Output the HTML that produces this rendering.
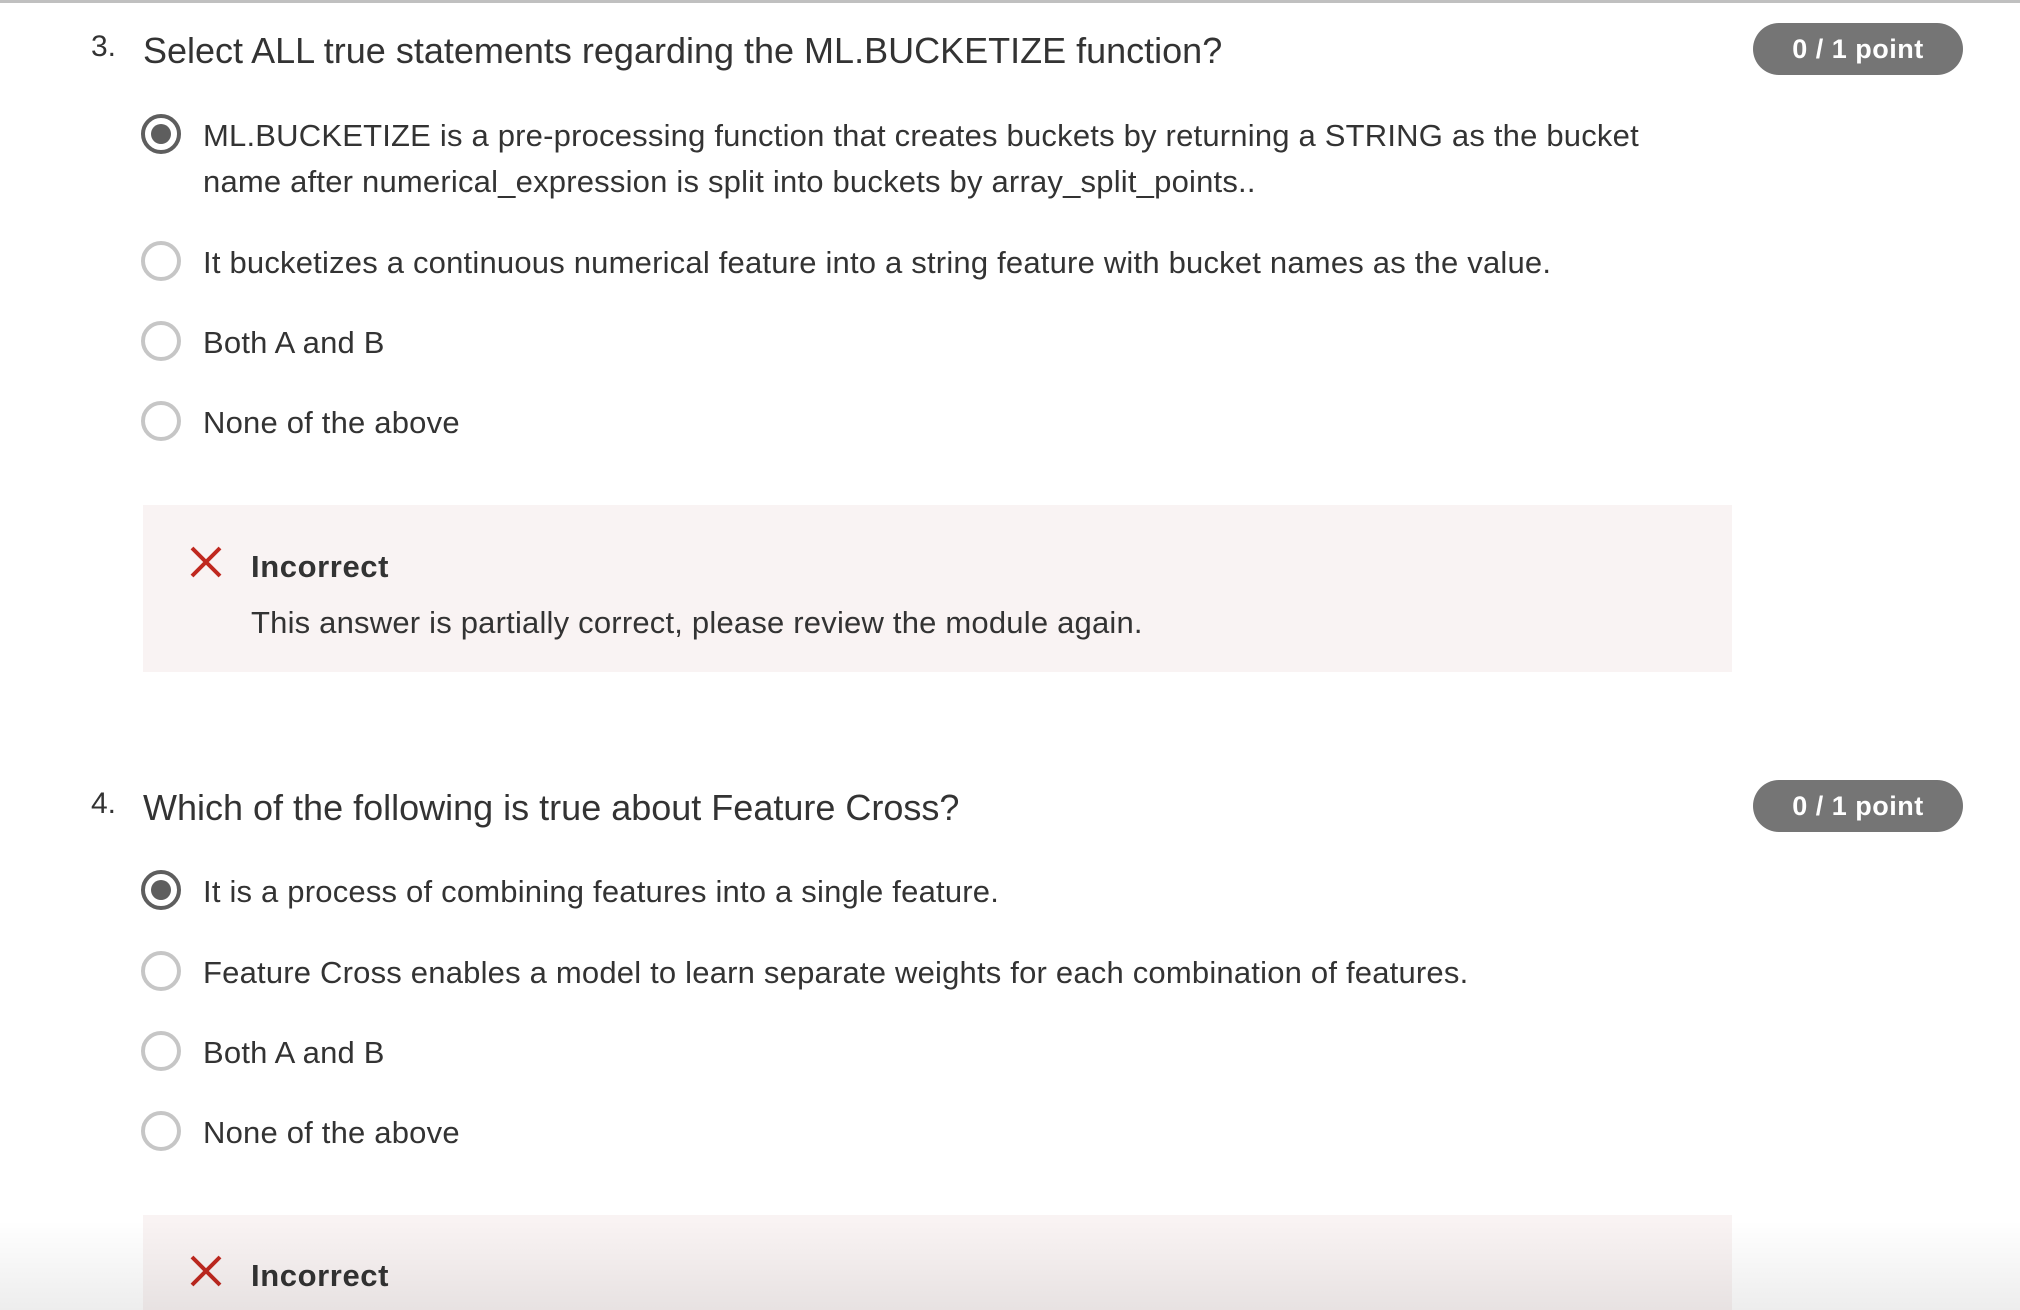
<!DOCTYPE html>
<html><head><meta charset="utf-8"><style>
*{margin:0;padding:0;box-sizing:border-box}
body{width:2020px;height:1310px;background:#fff;position:relative;overflow:hidden;font-family:"Liberation Sans",sans-serif;color:#333}
.top{position:absolute;left:0;top:0;width:2020px;height:3px;background:#c0c0c0}
.num{position:absolute;left:91px;font-size:30px;color:#333}
.h{position:absolute;left:143px;font-size:36px;letter-spacing:0px;color:#333;white-space:nowrap}
.pill{position:absolute;left:1753px;width:210px;height:52px;border-radius:26px;background:#757575;color:#fff;font-weight:bold;font-size:27px;line-height:52px;text-align:center;letter-spacing:0.5px}
.r{position:absolute;left:141px;width:40px;height:40px;border-radius:50%;border:4px solid #c6c6c6}
.r.s{border-color:#5e5e5e}
.r.s::after{content:"";position:absolute;left:6px;top:6px;width:20px;height:20px;border-radius:50%;background:#5e5e5e}
.o{position:absolute;left:203px;font-size:31px;letter-spacing:0.2px;line-height:46px;white-space:nowrap;color:#333}
.fb{position:absolute;left:143px;width:1589px;background:#f9f3f3}
.x{position:absolute;left:189px;width:34px;height:34px}
.inc{position:absolute;left:251px;font-size:31px;font-weight:bold;letter-spacing:0.6px;color:#333}
.shade{position:absolute;left:0;top:1220px;width:2020px;height:90px;background:linear-gradient(rgba(0,0,0,0),rgba(0,0,0,0.07))}
</style></head><body>
<div class="top"></div>

<div class="num" style="top:30px">3.</div>
<div class="h" style="top:30px">Select ALL true statements regarding the ML.BUCKETIZE function?</div>
<div class="pill" style="top:23px">0 / 1 point</div>

<div class="r s" style="top:114px"></div>
<div class="o" style="top:113px">ML.BUCKETIZE is a pre-processing function that creates buckets by returning a STRING as the bucket<br>name after numerical_expression is split into buckets by array_split_points..</div>
<div class="r" style="top:241px"></div>
<div class="o" style="top:240px">It bucketizes a continuous numerical feature into a string feature with bucket names as the value.</div>
<div class="r" style="top:321px"></div>
<div class="o" style="top:320px">Both A and B</div>
<div class="r" style="top:401px"></div>
<div class="o" style="top:400px">None of the above</div>

<div class="fb" style="top:505px;height:167px"></div>
<svg class="x" style="top:545px" viewBox="0 0 34 34"><path d="M3 3L31 31M31 3L3 31" stroke="#c0281f" stroke-width="4"/></svg>
<div class="inc" style="top:549px">Incorrect</div>
<div class="o" style="left:251px;top:600px">This answer is partially correct, please review the module again.</div>

<div class="num" style="top:787px">4.</div>
<div class="h" style="top:787px">Which of the following is true about Feature Cross?</div>
<div class="pill" style="top:780px">0 / 1 point</div>

<div class="r s" style="top:870px"></div>
<div class="o" style="top:869px">It is a process of combining features into a single feature.</div>
<div class="r" style="top:951px"></div>
<div class="o" style="top:950px">Feature Cross enables a model to learn separate weights for each combination of features.</div>
<div class="r" style="top:1031px"></div>
<div class="o" style="top:1030px">Both A and B</div>
<div class="r" style="top:1111px"></div>
<div class="o" style="top:1110px">None of the above</div>

<div class="fb" style="top:1215px;height:95px"></div>
<svg class="x" style="top:1254px" viewBox="0 0 34 34"><path d="M3 3L31 31M31 3L3 31" stroke="#c0281f" stroke-width="4"/></svg>
<div class="inc" style="top:1258px">Incorrect</div>
<div class="shade"></div>
</body></html>
